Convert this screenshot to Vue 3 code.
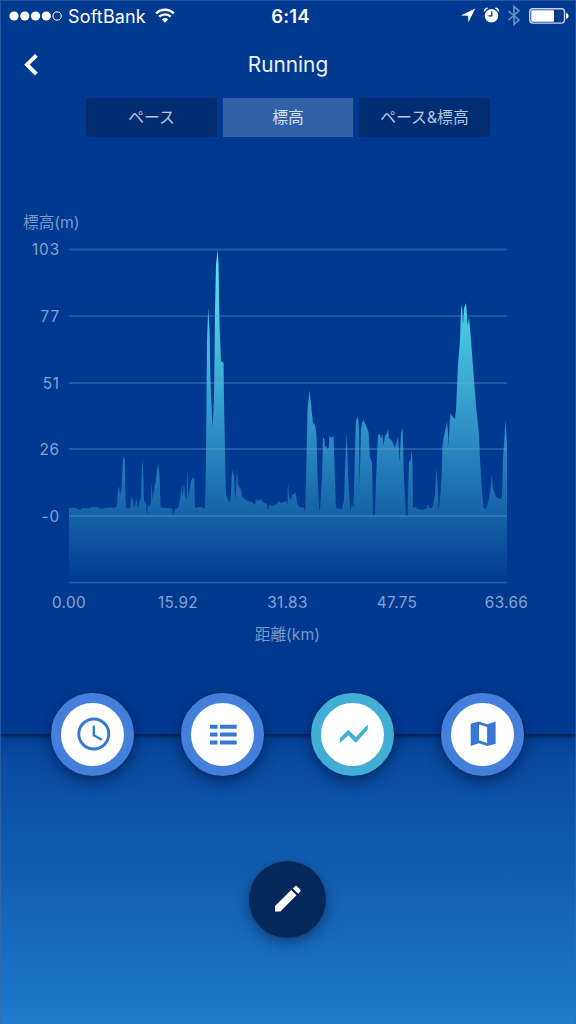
<script setup>
const tabs = [
  { label: 'ペース', active: false },
  { label: '標高', active: true },
  { label: 'ペース&標高', active: false },
]
const rows = [
  { y: 249.5, label: '103' },
  { y: 316.2, label: '77' },
  { y: 383, label: '51' },
  { y: 449, label: '26' },
  { y: 516, label: '-0' },
  { y: 582.7, label: '' },
]
const ticks = [
  { x: 69, label: '0.00' },
  { x: 178, label: '15.92' },
  { x: 287.5, label: '31.83' },
  { x: 397, label: '47.75' },
  { x: 506.5, label: '63.66' },
]
const profile = `69,583 69,508 75,507.5 77,509 80,510 82,508 88,508.5 92,507.3 97,507 101,509 105,508 110,507.5 114,508 117,506 118,488 119,487
120,495 121.5,490 123,460 124,456 124.8,460 125.5,500 126.5,508 130,508 131,500 132,495 133,501 134,505 135,507 136,498 138,508 139,503 141,498
142.3,459 143.3,475 144,500 146,504 147,516 148,505 150,507 151,500 151.5,482 152.5,500 154,490 156,480 157,470 158.3,464 159.5,475 160.5,507
163,508 170,508 172.5,509 173,516 175,509 178,508 180,500 181.5,485 182.5,497 184,483 185,495 186.5,500 187.5,470 188.3,498 190,488 191,481
193.5,477 194.2,480 195,508 200,507 205,508.5 206,460 207,340 208.3,308 209.5,330 210.5,380 212.5,428 214,400 215,310 216,265 217.6,250
218.5,265 219.5,325 221,361 222.5,362 223.6,363 224,400 225,450 226,495 228,500 229.5,504 231,495 232,470 233.8,475 235,498 236,495 237,469
238,485 240,489 241,488 242,497 247,501 252,502 255,505 256,499 258,501 261,499 264,503 267,504 268,511 269,505 272,506 277,504 279,501
281,503 286,501 287.5,505 288,482 289,496 291,500 292,495 296,493 297,504 300,507 304,508 305,512 306,480 307.5,410 309.5,390 311,404
313,423 315,425 316.5,435 317.5,475 319,508 320,510 322,480 323,437 324.3,439 325,447 326,446 327,450 329,447 329.5,435 331,438 333.5,436
334,450 336,508 342,509 344,500 345,470 346.6,432 348,475 349.5,500 350.5,510 352,503 353.5,508 355,450 356,420 358,417 359,430 359.5,487
361,430 362,423 363.5,420 366,425 368.5,432 370,458 372,462 373,516 375,514 376,480 378,435 380,434 381,439 382.5,434 383.3,446 385,436
387,433 388,429 389,438 392,441 395,448 398,437 399.5,463 401,433 402.5,428 403,440 404,480 406,516 407.5,516 408.5,480 409,462 410.5,460
411.8,450 412.5,462 413,508 416,507 418,509 423,510 427,508 428,503 429,508 432,508 434,500 435,495 436.3,468 438,490 438.5,511 440,500
441.5,480 442.5,445 444,436 445,432 447,422 448,432 448.7,447 449.5,425 450.5,413 452,416 455,419 456,410 458,365 460,340 461,310 462,304
463,325 464,308 465,306 466,303 467,315 467.5,326 469,317 471,340 474,380 476,405 479,435 480,460 482,490 483.5,508 486,509 489,499 491,485
491.7,475 493,488 496,497 500,499 502,498 503,460 505.5,420 507,443 507,583`
</script>

<template>
  <main class="screen">
    <section class="panel">
      <header class="status">
        <div class="carrier">
          <svg class="signal" width="54" height="12" viewBox="0 0 54 12">
            <circle v-for="n in 4" :key="n" :cx="n * 10.75 - 5.7" cy="6" r="4.6" fill="#fff" />
            <circle cx="48.1" cy="6" r="4.1" fill="none" stroke="#fff" />
          </svg>
          <span>SoftBank</span>
          <svg class="wifi" width="20" height="16" viewBox="0 0 20 16" fill="none" stroke="#fff" stroke-width="2.4">
            <path d="M1.2 5.3a12.6 12.6 0 0 1 17.6 0M4.3 8.7a8.2 8.2 0 0 1 11.4 0" />
            <path d="M6.8 11.4a4.8 4.8 0 0 1 6.4 0L10 14.8z" fill="#fff" stroke="none" />
          </svg>
        </div>
        <time>6:14</time>
        <svg class="indicators" width="112" height="32" viewBox="0 0 112 32">
          <path d="M15.3 8.6 8.4 22.2 8.1 15.8.8 15.6z" fill="#fff" />
          <circle cx="31.5" cy="15.7" r="6.8" fill="#fff" />
          <path d="M24.3 11.3q.6-2.6 3.2-3.3M38.7 11.3q-.6-2.6-3.2-3.3" fill="none" stroke="#fff" stroke-width="1.5" />
          <path d="M31.8 11.2v4.7h-3.3" fill="none" stroke="#003a90" stroke-width="1.3" />
          <path d="m48.4 11 10.6 9-5 4.4V6.4l5 4.4-10.6 9.4" fill="none" stroke="#6a92c6" stroke-width="1.6" />
          <rect x="69.8" y="8.7" width="34.7" height="14.4" rx="3" fill="none" stroke="#c9d3ea" stroke-width="1.4" />
          <rect x="71.3" y="10.2" width="22.7" height="11.6" rx="1" fill="#fff" />
          <path d="M106 12.7q2.6.7 2.6 3.2t-2.6 3.2z" fill="#fff" />
        </svg>
      </header>

      <div class="title-bar">
        <svg class="back" width="16" height="24" viewBox="0 0 16 24">
          <path d="M13.4 2.4 4 11.7l9.4 9.4" fill="none" stroke="#fff" stroke-width="4" />
        </svg>
        <h1>Running</h1>
      </div>

      <nav class="tabs">
        <button v-for="tab in tabs" :key="tab.label" :class="{ active: tab.active }">{{ tab.label }}</button>
      </nav>

      <svg class="chart" width="576" height="460" viewBox="0 200 576 460">
        <defs>
          <linearGradient id="elevation" gradientUnits="userSpaceOnUse" x1="0" y1="250" x2="0" y2="583">
            <stop offset="0" stop-color="#5ceef0" />
            <stop offset=".2" stop-color="#4acbe2" />
            <stop offset=".4" stop-color="#3ba9d3" />
            <stop offset=".6" stop-color="#2985c0" />
            <stop offset=".8" stop-color="#1562a5" />
            <stop offset="1" stop-color="#003a90" />
          </linearGradient>
        </defs>
        <polygon :points="profile" fill="url(#elevation)" />
        <g v-for="row in rows" :key="row.y">
          <line x1="69" x2="507" :y1="row.y" :y2="row.y" class="grid-line" />
          <text x="60" :y="row.y + 5.6" text-anchor="end" class="value">{{ row.label }}</text>
        </g>
        <text v-for="tick in ticks" :key="tick.x" :x="tick.x" y="608" text-anchor="middle" class="value tick">{{ tick.label }}</text>
        <text x="23" y="228" class="axis">標高(m)</text>
        <text x="287.3" y="640" text-anchor="middle" class="axis">距離(km)</text>
      </svg>
    </section>

    <nav class="actions">
      <button aria-label="Time">
        <svg width="40" height="40" viewBox="0 0 40 40" fill="none" stroke="#3678d4">
          <circle cx="20.8" cy="20" r="15" stroke-width="2.9" />
          <path d="M20.8 11.8v9.4l8 4.6" stroke-width="2.4" />
        </svg>
      </button>
      <button aria-label="Laps">
        <svg width="40" height="40" viewBox="0 0 40 40" fill="#3678d4">
          <path d="M7 10.7h7.6v4H7zm10 0h16.7v4H17zM7 18.5h7.6v4H7zm10 0h16.7v4H17zM7 26.4h7.6v4H7zm10 0h16.7v4H17z" />
        </svg>
      </button>
      <button class="selected" aria-label="Chart">
        <svg width="40" height="40" viewBox="0 0 40 40" fill="#43aed5">
          <path d="m6.8 24.3 8.5-8.6 7.7 7.2 11.7-12.3v5L22.8 29l-7.5-7.7-8.5 8z" />
        </svg>
      </button>
      <button aria-label="Map">
        <svg width="40" height="40" viewBox="0 0 40 40">
          <path d="m7.7 9.8 8.1-2.3 8.5 2.8 8.3-2.8v22.2l-8.3 2.4-8.5-2.9-8.1 2.9z" fill="#3678d4" />
          <path d="m16 10.4 8.1 2.7v15.8l-8.1-2.6z" fill="#fff" />
        </svg>
      </button>
    </nav>

    <button class="edit" aria-label="Edit">
      <svg width="40" height="40" viewBox="0 0 40 40" fill="#fff">
        <path d="M7 27.1 23.2 11l5.3 5.3L12.4 32.5H7zM24.8 9.4l2-2q1.2-1.2 2.4 0l3 3q1.1 1.2 0 2.4l-2 2z" />
      </svg>
    </button>
    <div class="edge"></div>
  </main>
</template>

<style scoped>
.screen {
  position: relative;
  width: 576px;
  height: 1024px;
  overflow: hidden;
  background: linear-gradient(#06469b 734px, #2079c9 1024px);
  font-family: Inter, "Noto Sans CJK JP", sans-serif;
}
button { border: 0; padding: 0; font: inherit; color: inherit; }
svg { display: block; }
.panel {
  height: 734px;
  background: #003a90;
  box-shadow: 0 1px 3px 1px #001740d9, 0 3px 14px #00235c80;
}
.status {
  display: grid;
  grid-template-columns: 1fr auto 1fr;
  align-items: center;
  height: 32px;
  padding: 0 4px 0 9px;
  color: #fff;
  font-size: 18px;
}
.carrier { display: flex; align-items: center; letter-spacing: .15px; }
.signal { margin-right: 5px; }
.wifi { margin-left: 9px; }
time { font-size: 18.5px; font-weight: 600; letter-spacing: .2px; }
.indicators { justify-self: end; }
.title-bar {
  display: grid;
  grid-template-columns: 60px 1fr 60px;
  align-items: center;
  height: 66px;
}
.back { margin-left: 23px; }
h1 { margin: 0 0 1px; color: #eaf0fa; text-align: center; font-size: 20.8px; font-weight: 400; }
.tabs {
  display: flex;
  justify-content: center;
  gap: 6px;
  height: 38.7px;
}
.tabs button { width: 130.5px; padding-bottom: 2px; background: #002d71; color: #b4c5e0; font-size: 15.8px; }
.tabs .active { background: #3361a5; color: #d4e0f1; }
.chart { margin-top: 63.3px; }
.grid-line { stroke: #7fa3d2; stroke-opacity: .3; stroke-width: 1.8; }
.value { fill: #83a3d2; font-size: 15.3px; letter-spacing: .9px; }
.tick { letter-spacing: .35px; }
.axis { fill: #7897c9; font-size: 15.7px; }
.actions {
  position: relative;
  display: flex;
  justify-content: space-between;
  margin-top: -41.5px;
  padding: 0 52px 0 51px;
}
.actions button {
  display: grid;
  place-items: center;
  box-sizing: border-box;
  width: 83px;
  height: 83px;
  border: 10.5px solid #447fdb;
  border-radius: 50%;
  background: #fff;
  box-shadow: 0 5px 15px #001c50b3, 0 0 3px #00235f80;
}
.actions .selected { border-color: #43aed5; }
.edit {
  display: grid;
  place-items: center;
  width: 77px;
  height: 77px;
  margin: 85px 0 0 249px;
  border-radius: 50%;
  background: #05285b;
  box-shadow: 0 4px 14px #002557aa;
}
.edge {
  position: absolute;
  inset: 0;
  border: 1px solid #386bac99;
  border-bottom: 0;
  pointer-events: none;
}
</style>
